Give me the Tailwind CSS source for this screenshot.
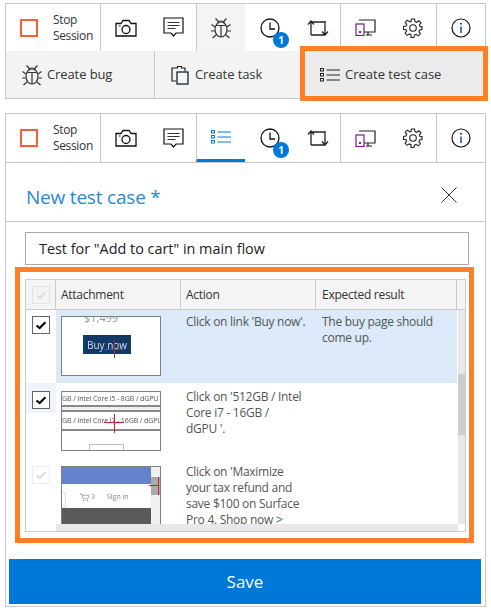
<!DOCTYPE html>
<html><head><meta charset="utf-8">
<script src="https://cdn.jsdelivr.net/npm/@tailwindcss/browser@4"></script>
</head>
<body class="bg-white font-['Open_Sans','Noto_Sans',sans-serif] text-[#333]">
<svg class="hidden" width="0" height="0">
<defs>
<symbol id="cam" viewBox="0 0 22 18"><path d="M1 4.500h5l2-3h6l2 3h5v12.500H1z" fill="#fff" stroke="#111" stroke-width="1.300"/><circle cx="11" cy="10.500" r="4" fill="none" stroke="#111" stroke-width="1.300"/><path d="M4 7h1.500" stroke="#111"/></symbol>
<symbol id="note" viewBox="0 0 21 21"><path d="M1 1h19v15h-7l-2.500 3-2.500-3H1z" fill="#fff" stroke="#111" stroke-width="1.200"/><path d="M4.500 5.500h12M4.500 8.500h12M4.500 11.500h8" stroke="#333" stroke-width="1.200"/></symbol>
<symbol id="bug" viewBox="0 0 22 22"><ellipse cx="11" cy="12.500" rx="6" ry="7.500" fill="none" stroke="#333" stroke-width="1.200"/><path d="M6 8.500h10M11 8.500V20M7.500 5.500C8 3.500 14 3.500 14.500 5.500M8 4 5.500 1.500M14 4l2.500-2.500M5 10 1.500 7.500M17 10l3.500-2.500M5 14H1M17 14h4M6 18l-3.500 3M16 18l3.500 3" fill="none" stroke="#333" stroke-width="1.200"/></symbol>
<symbol id="clock" viewBox="0 0 20 20"><circle cx="10" cy="10" r="9" fill="#fff" stroke="#111" stroke-width="1.300"/><path d="M10 4.500V11H15" fill="none" stroke="#111" stroke-width="1.300"/></symbol>
<symbol id="rep" viewBox="0 0 22 18"><path d="M4 16V2.500M1 5.500l3-3.500 3 3.500M4 3h14M18 2v13.500M15 12.500l3 3.500 3-3.500M18 16H4" fill="none" stroke="#222" stroke-width="1.300"/></symbol>
<symbol id="dev" viewBox="0 0 21 17"><path d="M4 1h16v12H9" fill="none" stroke="#222" stroke-width="1.200"/><path d="M11 16h6M13 13v3" stroke="#222" stroke-width="1.200"/><rect x="1" y="5" width="8" height="11.500" fill="#fff" stroke="#7a1a8a" stroke-width="1.200"/><rect x="4" y="12" width="2" height="2" fill="#444"/></symbol>
<symbol id="gear" viewBox="0 0 20 20"><path d="M8.500 1h3l.5 2.600 1.600.7 2.200-1.500 2.100 2.100-1.500 2.200.7 1.600L19 8.500v3l-2.400.5-.7 1.600 1.500 2.200-2.100 2.100-2.200-1.500-1.600.7-.5 2.400h-3L8 16.600l-1.600-.7-2.200 1.500-2.100-2.100 1.500-2.200-.7-1.600L.5 11.500v-3L3 8l.7-1.600-1.500-2.200 2.100-2.100 2.200 1.500L8 3.600z" fill="none" stroke="#222" stroke-width="1.100"/><circle cx="10" cy="10" r="3.300" fill="none" stroke="#222" stroke-width="1.100"/></symbol>
<symbol id="info" viewBox="0 0 20 20"><circle cx="10" cy="10" r="9" fill="none" stroke="#111" stroke-width="1.200"/><path d="M10 8.500V15" stroke="#1a3a8a" stroke-width="1.400"/><circle cx="10" cy="5.800" r="1" fill="#1a3a8a"/></symbol>
<symbol id="list" viewBox="0 0 20 14"><path d="M6.500 2H20M6.500 7H20M6.500 12H20" stroke="currentColor" stroke-width="1.200"/><rect x=".5" y=".5" width="3" height="2.500" fill="none" stroke="currentColor"/><rect x=".5" y="5.500" width="3" height="2.500" fill="none" stroke="currentColor"/><rect x=".5" y="10.500" width="3" height="2.500" fill="none" stroke="currentColor"/></symbol>
<symbol id="task" viewBox="0 0 18 21"><path d="M5 4H1v13h4" fill="none" stroke="#222" stroke-width="1.200"/><path d="M5 4h1.500V2.500h4V4H14v3" fill="none" stroke="#222" stroke-width="1.200"/><rect x="6" y="8" width="11" height="12" fill="#f3f3f3" stroke="#123" stroke-width="1.300"/></symbol>
<symbol id="chk" viewBox="0 0 18 18"><path d="M4 9.500 7.500 12.500 14 6" fill="none" stroke="currentColor" stroke-width="2.400"/></symbol>
</defs></svg>

<div class="relative h-[612px] w-[491px] overflow-hidden">
  <!-- first panel -->
  <div class="ml-[5px] mt-[3px] w-[481px] border border-[#c8c8c8]">
    <div class="flex h-[47px] bg-white">
      <div class="flex w-[95px] items-center border-r border-[#c8c8c8] pl-[14px]">
        <div class="h-[18px] w-[18px] border-2 border-[#f2603c]"></div>
        <div class="ml-[15px] text-[12px] leading-[16px] tracking-[-0.35px]">Stop<br>Session</div>
      </div>
      <div class="flex w-[95px] items-center">
        <svg class="ml-[14px] h-[18px] w-[22px]"><use href="#cam"/></svg>
        <svg class="ml-[26px] h-[21px] w-[21px]"><use href="#note"/></svg>
      </div>
      <div class="flex w-[49px] items-center justify-center border-l border-[#c8c8c8] bg-[#f4f4f4]">
        <svg class="h-[22px] w-[22px]"><use href="#bug"/></svg>
      </div>
      <div class="flex w-[95px] items-center">
        <div class="relative ml-[15px] h-[20px] w-[20px]">
          <svg class="h-[20px] w-[20px]"><use href="#clock"/></svg>
          <div class="absolute left-[13px] top-[14px] flex h-[16px] w-[16px] items-center justify-center rounded-full bg-[#0078d7] text-[10px] font-bold leading-none text-white">1</div>
        </div>
        <svg class="ml-[27px] h-[18px] w-[22px]"><use href="#rep"/></svg>
      </div>
      <div class="flex w-[96px] items-center border-l border-[#c8c8c8]">
        <svg class="ml-[14px] h-[17px] w-[21px]"><use href="#dev"/></svg>
        <svg class="ml-[27px] h-[20px] w-[20px]"><use href="#gear"/></svg>
      </div>
      <div class="flex flex-1 items-center justify-center border-l border-[#c8c8c8]">
        <svg class="h-[20px] w-[20px]"><use href="#info"/></svg>
      </div>
    </div>
    <div class="flex h-[47px] bg-[#f3f3f3] text-[13px]">
      <div class="flex w-[149px] items-center border-r border-[#c8c8c8] pl-[15px]">
        <svg class="h-[22px] w-[22px]"><use href="#bug"/></svg>
        <span class="ml-[4px] tracking-[-0.1px]">Create bug</span>
      </div>
      <div class="flex w-[151px] items-center pl-[16px]">
        <svg class="h-[21px] w-[18px]"><use href="#task"/></svg>
        <span class="ml-[6px] tracking-[-0.1px]">Create task</span>
      </div>
      <div class="flex flex-1 items-center bg-[#ebebeb] pl-[14px]">
        <svg class="h-[14px] w-[20px] text-[#222]"><use href="#list"/></svg>
        <span class="ml-[5px]">Create test case</span>
      </div>
    </div>
  </div>

  <!-- second panel -->
  <div class="ml-[5px] mt-[14px] w-[481px] border border-[#c8c8c8] pb-[2px]">
    <div class="flex h-[49px] border-b border-[#c8c8c8]">
      <div class="flex w-[95px] items-center border-r border-[#c8c8c8] pl-[14px]">
        <div class="h-[18px] w-[18px] border-2 border-[#f2603c]"></div>
        <div class="ml-[15px] text-[12px] leading-[16px] tracking-[-0.35px]">Stop<br>Session</div>
      </div>
      <div class="flex w-[95px] items-center">
        <svg class="ml-[14px] h-[18px] w-[22px]"><use href="#cam"/></svg>
        <svg class="ml-[26px] h-[21px] w-[21px]"><use href="#note"/></svg>
      </div>
      <div class="flex w-[49px] items-center justify-center border-b-[3px] border-l border-b-[#0078d7] border-l-[#c8c8c8]">
        <svg class="h-[14px] w-[20px] text-[#0078d7]"><use href="#list"/></svg>
      </div>
      <div class="flex w-[95px] items-center">
        <div class="relative ml-[15px] h-[20px] w-[20px]">
          <svg class="h-[20px] w-[20px]"><use href="#clock"/></svg>
          <div class="absolute left-[13px] top-[14px] flex h-[16px] w-[16px] items-center justify-center rounded-full bg-[#0078d7] text-[10px] font-bold leading-none text-white">1</div>
        </div>
        <svg class="ml-[27px] h-[18px] w-[22px]"><use href="#rep"/></svg>
      </div>
      <div class="flex w-[96px] items-center border-l border-[#c8c8c8]">
        <svg class="ml-[14px] h-[17px] w-[21px]"><use href="#dev"/></svg>
        <svg class="ml-[27px] h-[20px] w-[20px]"><use href="#gear"/></svg>
      </div>
      <div class="flex flex-1 items-center justify-center border-l border-[#c8c8c8]">
        <svg class="h-[20px] w-[20px]"><use href="#info"/></svg>
      </div>
    </div>

    <div class="flex h-[59px] items-center justify-between border-b border-[#c8c8c8] pl-[20px] pr-[28px] pt-[5px]">
      <div class="mt-[5px] text-[19px] tracking-[-0.2px] text-[#2b88d8]">New test case *</div>
      <svg class="h-[16px] w-[16px]" viewBox="0 0 16 16"><path d="M.5.500l15 15M15.500.500l-15 15" stroke="#333" stroke-width="1"/></svg>
    </div>

    <div class="ml-[19px] mt-[10px] flex h-[33px] w-[444px] items-center border border-[#aaa] pl-[13px] text-[14.4px] text-[#222]">Test for "Add to cart" in main flow</div>

    <!-- table -->
    <div class="relative ml-[19px] mt-[14px] h-[253px] w-[441px] overflow-hidden border border-[#ccc] text-[12px] leading-[16px] tracking-[-0.27px] text-[#555]">
      <div class="flex h-[30px] border-b border-[#ccc] bg-[#f4f4f4] text-[#333]">
        <div class="flex w-[30px] items-center justify-center border-r border-[#ccc]">
          <div class="flex h-[18px] w-[18px] items-center justify-center border border-[#e2e2e2] text-[#ddd]"><svg class="h-[16px] w-[16px]"><use href="#chk"/></svg></div>
        </div>
        <div class="flex w-[125px] items-center border-r border-[#ccc] pl-[5px]">Attachment</div>
        <div class="flex w-[135px] items-center border-r border-[#ccc] pl-[5px]">Action</div>
        <div class="flex w-[141px] items-center border-r border-[#ccc] pl-[6px]">Expected result</div>
      </div>
      <div class="h-[214px] w-[431px] overflow-hidden">
        <!-- row 1 -->
        <div class="flex h-[73px]">
          <div class="w-[30px] pl-[6px] pt-[6px]">
            <div class="flex h-[18px] w-[18px] items-center justify-center border border-[#666] bg-white text-black"><svg class="h-[16px] w-[16px]"><use href="#chk"/></svg></div>
          </div>
          <div class="flex flex-1 bg-[#dbe9f9]">
            <div class="w-[125px] pl-[5px] pt-[6px]">
              <div class="relative h-[60px] w-[100px] overflow-hidden border border-[#808080] bg-white tracking-normal blur-[0.3px]">
                <div class="absolute left-[22px] top-[-6px] text-[11px] leading-[14px] text-[#999]">$1,499</div>
                <div class="absolute left-[21px] top-[18px] flex h-[19px] w-[48px] items-center justify-center bg-[#123a66] text-[10px] text-[#dde]">Buy now</div>
                <div class="absolute left-[42px] top-[32px] h-[1px] w-[20px] bg-[#d02030]"></div>
                <div class="absolute left-[52px] top-[23px] h-[18px] w-[1px] bg-[#d02030]"></div>
              </div>
            </div>
            <div class="w-[135px] pl-[5px] pt-[4px]">Click on link 'Buy now'.</div>
            <div class="w-[141px] pl-[6px] pt-[4px]">The buy page should<br>come up.</div>
          </div>
        </div>
        <!-- row 2 -->
        <div class="flex h-[75px]">
          <div class="h-[30px] w-[30px] bg-[#eef4fb] pl-[6px] pt-[8px]">
            <div class="flex h-[18px] w-[18px] items-center justify-center border border-[#666] bg-white text-black"><svg class="h-[16px] w-[16px]"><use href="#chk"/></svg></div>
          </div>
          <div class="w-[125px] pl-[5px] pt-[8px]">
            <div class="relative h-[60px] w-[100px] overflow-hidden border border-[#808080] bg-white text-[7px] leading-[10px] tracking-[-0.1px] text-[#555] blur-[0.3px]">
              <div class="h-[13px] whitespace-nowrap pt-[2px]">GB / Intel Core i5 - 8GB / dGPU</div>
              <div class="h-[7px] border-y-2 border-[#888] bg-[#f0f0f0]"></div>
              <div class="h-[19px] whitespace-nowrap border-b-2 border-[#888] pt-[4px]">GB / Intel Core i7 - 16GB / dGPU</div>
              <div class="absolute left-[52px] top-[22px] h-[19px] w-[1px] bg-[#d02030]"></div>
              <div class="absolute left-[42px] top-[30px] h-[1px] w-[20px] bg-[#d02030]"></div>
              <div class="absolute left-[27px] top-[52px] h-[14px] w-[35px] border border-[#bbb]"></div>
            </div>
          </div>
          <div class="w-[135px] pl-[5px] pt-[6px]">Click on '512GB / Intel<br>Core i7 - 16GB /<br>dGPU '.</div>
        </div>
        <!-- row 3 -->
        <div class="flex h-[70px]">
          <div class="w-[30px] pl-[6px] pt-[8px]">
            <div class="flex h-[18px] w-[18px] items-center justify-center border border-[#eee] text-[#ddd]"><svg class="h-[16px] w-[16px]"><use href="#chk"/></svg></div>
          </div>
          <div class="w-[125px] pl-[5px] pt-[8px]">
            <div class="relative h-[60px] w-[100px] overflow-hidden border border-[#808080] bg-white text-[7px] tracking-normal text-[#888] blur-[0.3px]">
              <div class="h-[17px] w-[89px] bg-[#6483cc]"></div>
              <div class="absolute left-[-1px] top-[25px] h-[16px] w-[5px] border border-l-0 border-[#ddd]"></div>
              <div class="absolute left-[18px] top-[25px] flex items-center gap-[12px] leading-[10px]">
                <span class="flex items-center gap-[2px]"><svg class="h-[9px] w-[9px]" viewBox="0 0 10 10"><path d="M0 1h2l1.500 5.500h5L10 2.500H2.500" fill="none" stroke="#888" stroke-width=".8"/><circle cx="4" cy="8.500" r=".8" fill="#888"/><circle cx="8" cy="8.500" r=".8" fill="#888"/></svg>3</span>
                <span>Sign in</span>
              </div>
              <div class="absolute bottom-0 left-0 top-[41px] w-[89px] bg-[#5a5a5a]"></div>
              <div class="absolute right-0 top-0 h-full w-[9px] bg-[#f0f0f0]"></div>
              <div class="absolute right-0 top-[10px] h-[18px] w-[9px] bg-[#aaa]"></div>
              <div class="absolute right-[1px] top-[10px] h-[18px] w-[1px] bg-[#d02030]"></div>
              <div class="absolute right-[1px] top-[18px] h-[1px] w-[10px] bg-[#d02030]"></div>
            </div>
          </div>
          <div class="w-[135px] pl-[5px] pt-[6px]">Click on 'Maximize<br>your tax refund and<br>save $100 on Surface<br>Pro 4. Shop now &gt;</div>
        </div>
      </div>
      <!-- scrollbars -->
      <div class="absolute right-0 top-[30px] h-[214px] w-[7px] bg-[#e8e8e8]">
        <div class="mt-[64px] h-[61px] w-full bg-[#cdcdcd]"></div>
      </div>
      <div class="absolute bottom-0 left-[30px] h-[7px] w-[402px] bg-[#e8e8e8]"></div>
    </div>

    <div class="ml-[3px] mt-[27px] flex h-[45px] w-[472px] items-center justify-center bg-[#0078d7] text-[17px] font-medium text-white">Save</div>
  </div>

  <!-- highlight overlays -->
  <div class="absolute left-[300px] top-[46px] h-[55px] w-[188px] border-[5px] border-[#ff7f27]"></div>
  <div class="absolute left-[15px] top-[267px] h-[276px] w-[459px] border-[5px] border-[#ff7f27]"></div>
</div>
</body></html>
